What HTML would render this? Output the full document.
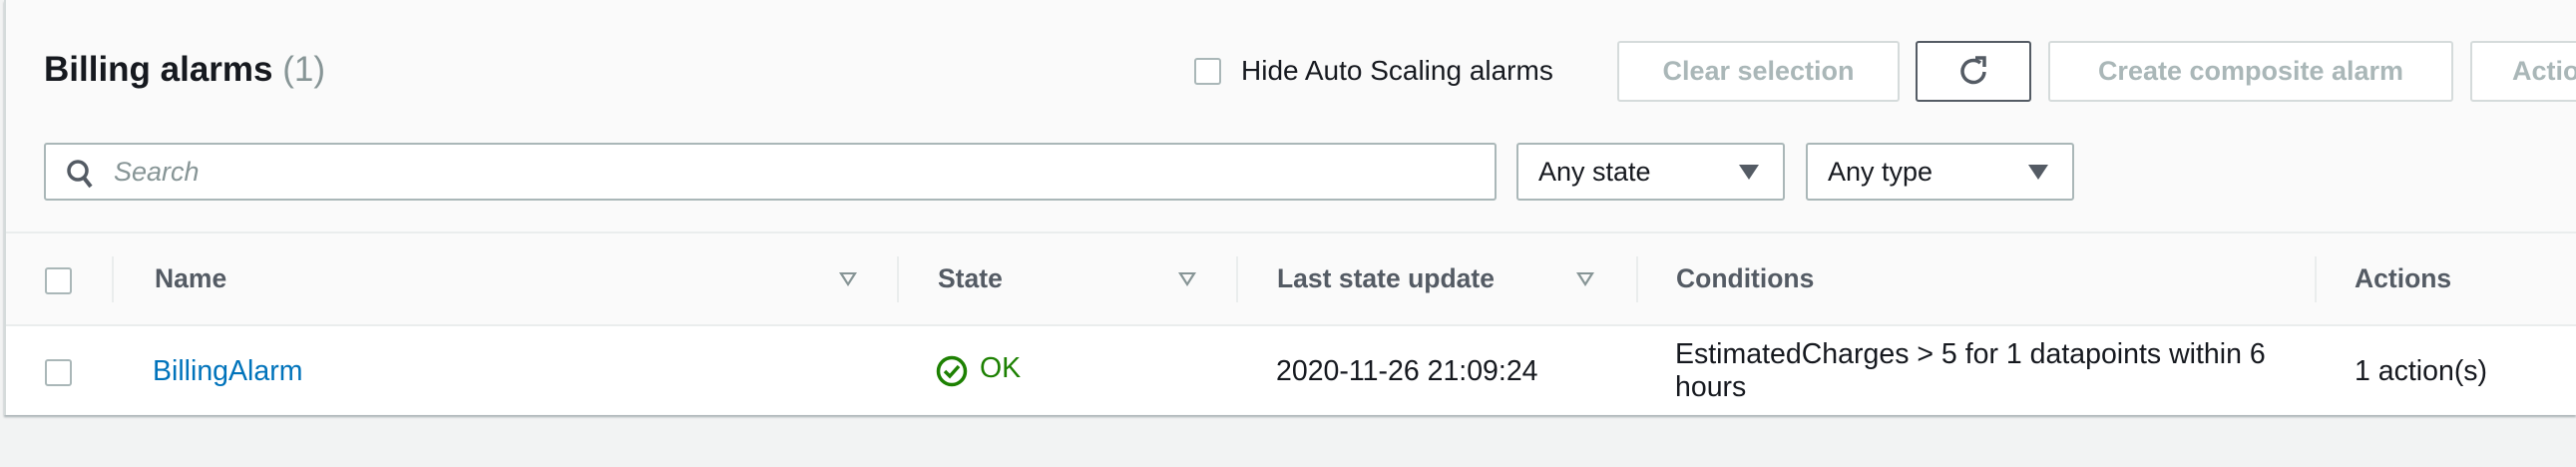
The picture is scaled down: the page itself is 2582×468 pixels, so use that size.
<!DOCTYPE html>
<html><head><meta charset="utf-8"><style>
*{box-sizing:border-box;margin:0;padding:0}
body{width:2582px;height:468px;background:#f2f3f3;font-family:"Liberation Sans",sans-serif;position:relative;overflow:hidden;color:#16191f}
.card{position:absolute;left:4px;top:0;width:2578px;height:416px;background:#fafafa;border-left:2px solid #d5dbdb;box-shadow:0 2px 2px rgba(0,28,36,.3)}
.a{position:absolute;white-space:nowrap}
.btn{position:absolute;top:41px;height:61px;border:2px solid #d5dbdb;border-radius:3px;background:#fff;color:#aab7b8;font-weight:bold;font-size:27px;display:flex;align-items:center;justify-content:center}
.cb{position:absolute;width:27px;height:27px;border:2px solid #aab7b8;border-radius:3px;background:#fff}
.sel{position:absolute;top:143px;height:58px;border:2px solid #aab7b8;border-radius:3px;background:#fff;font-size:27px;padding-left:20px;display:flex;align-items:center}
.tri{position:absolute;right:24px;top:20px;width:0;height:0;border-left:10px solid transparent;border-right:10px solid transparent;border-top:15px solid #545b64}
.h{position:absolute;top:264px;font-weight:bold;font-size:26.5px;color:#545b64}
.div{position:absolute;top:257px;width:2px;height:46px;background:#eaeded}
.ft{position:absolute;top:273px;width:0;height:0;border-left:9px solid transparent;border-right:9px solid transparent;border-top:14px solid #879596}
.ft::after{content:"";position:absolute;left:-5px;top:-12px;border-left:5px solid transparent;border-right:5px solid transparent;border-top:8px solid #fafafa}
.r{position:absolute;font-size:28.5px}
</style></head><body>
<div class="card">
</div>
<div class="a" style="left:44px;top:50px;font-size:35px;font-weight:bold">Billing alarms <span style="font-weight:normal;color:#879596">(1)</span></div>
<div class="cb" style="left:1197px;top:58px"></div>
<div class="a" style="left:1244px;top:55px;font-size:28px">Hide Auto Scaling alarms</div>
<div class="btn" style="left:1621px;width:283px">Clear selection</div>
<div class="btn" style="left:1920px;width:116px;border-color:#545b64">
<svg width="34" height="36" viewBox="0 0 34 36"><path d="M24 9 A11 11 0 1 0 28 18" fill="none" stroke="#545b64" stroke-width="3.5"/><path d="M19 4 L28 4 L28 13" fill="none" stroke="#545b64" stroke-width="3.5"/></svg></div>
<div class="btn" style="left:2053px;width:406px">Create composite alarm</div>
<div class="btn" style="left:2476px;width:140px;justify-content:flex-start;padding-left:40px">Actions</div>
<div class="sel" style="left:44px;width:1456px;padding-left:68px;color:#879596;font-style:italic">Search
<svg style="position:absolute;left:20px;top:14px" width="28" height="30" viewBox="0 0 28 30"><circle cx="12" cy="12" r="9" fill="none" stroke="#545b64" stroke-width="3.5"/><path d="M18 19 L25 28" stroke="#545b64" stroke-width="4"/></svg></div>
<div class="sel" style="left:1520px;width:269px">Any state<div class="tri"></div></div>
<div class="sel" style="left:1810px;width:269px">Any type<div class="tri"></div></div>
<div class="a" style="left:6px;top:232px;width:2576px;height:2px;background:#eaeded"></div>
<div class="a" style="left:6px;top:325px;width:2576px;height:2px;background:#eaeded"></div>
<div class="a" style="left:6px;top:327px;width:2576px;height:88px;background:#fff"></div>
<div class="cb" style="left:45px;top:268px"></div>
<div class="div" style="left:112px"></div>
<div class="h" style="left:155px">Name</div><div class="ft" style="left:841px"></div>
<div class="div" style="left:899px"></div>
<div class="h" style="left:940px">State</div><div class="ft" style="left:1181px"></div>
<div class="div" style="left:1239px"></div>
<div class="h" style="left:1280px">Last state update</div><div class="ft" style="left:1580px"></div>
<div class="div" style="left:1640px"></div>
<div class="h" style="left:1680px">Conditions</div>
<div class="div" style="left:2320px"></div>
<div class="h" style="left:2360px">Actions</div>
<div class="cb" style="left:45px;top:360px"></div>
<div class="r" style="left:153px;top:356px;color:#0073bb">BillingAlarm</div>
<svg class="a" style="left:938px;top:356px" width="32" height="32" viewBox="0 0 32 32"><circle cx="16" cy="16" r="13.5" fill="none" stroke="#1d8102" stroke-width="3.5"/><path d="M9 16 L14 21 L23 11" fill="none" stroke="#1d8102" stroke-width="3.5"/></svg>
<div class="r" style="left:982px;top:353px;color:#1d8102">OK</div>
<div class="r" style="left:1279px;top:356px">2020-11-26 21:09:24</div>
<div class="r" style="left:1679px;top:339px;line-height:33px">EstimatedCharges &gt; 5 for 1 datapoints within 6<br>hours</div>
<div class="r" style="left:2360px;top:356px">1 action(s)</div>
</body></html>
